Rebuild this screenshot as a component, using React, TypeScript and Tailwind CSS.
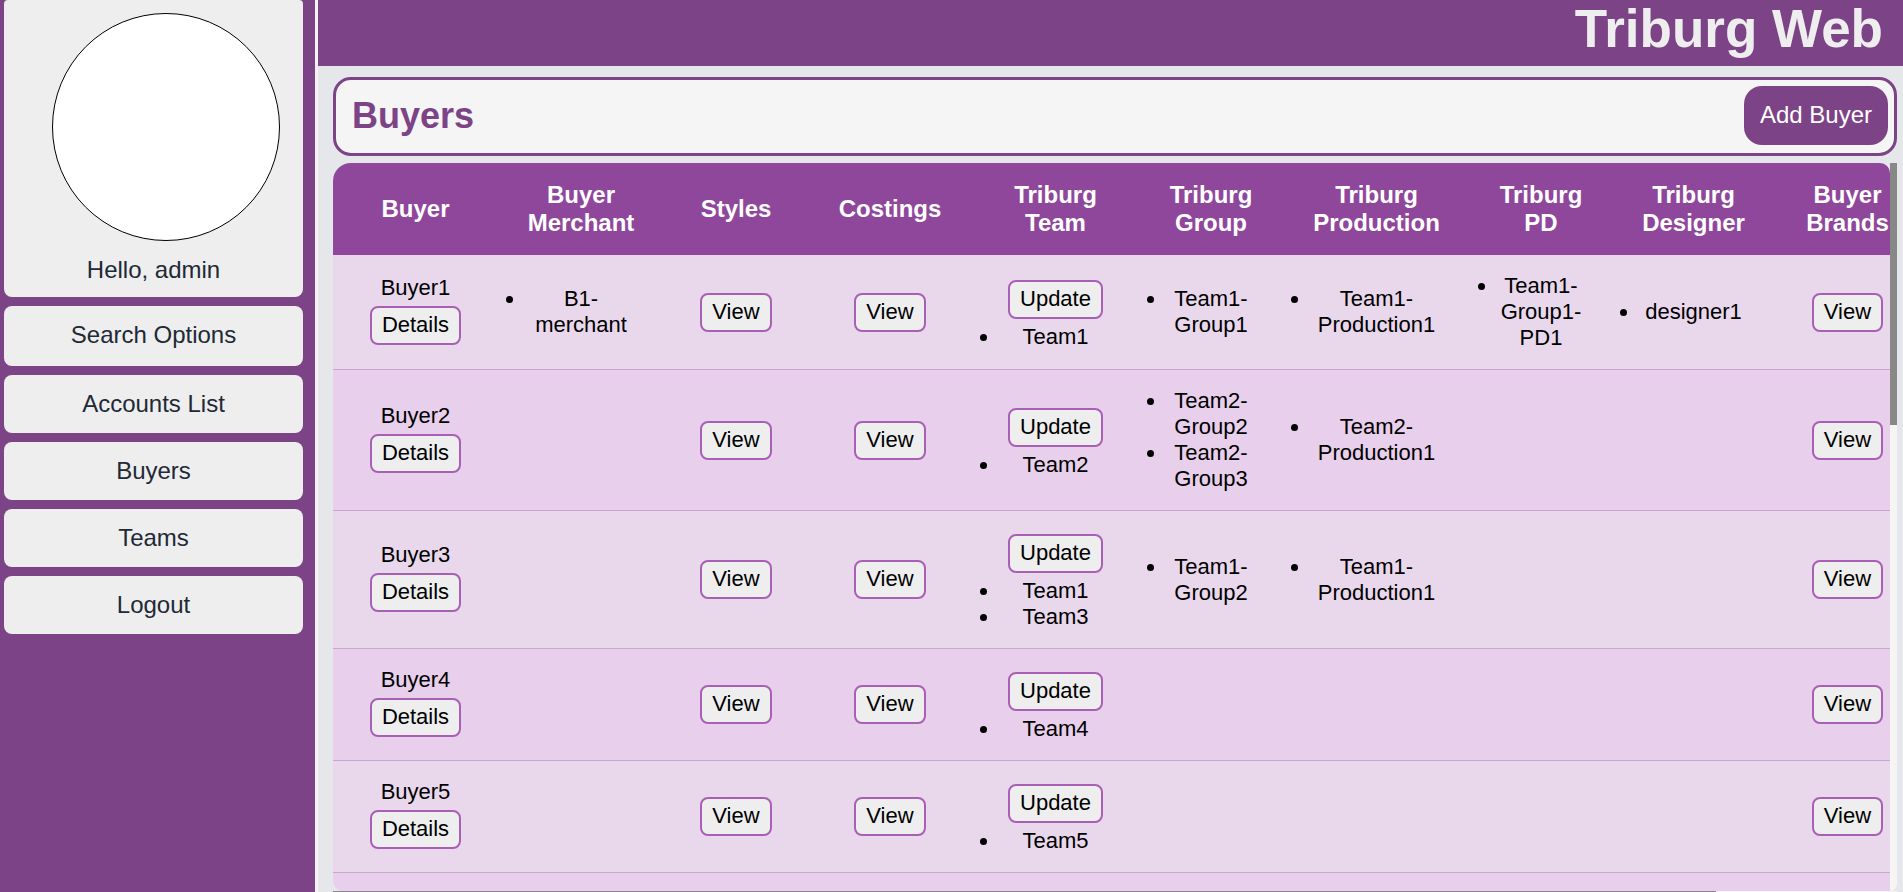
type Buyer = {
  name: string;
  merchants: string[];
  teams: string[];
  groups: string[];
  productions: string[];
  pds: string[];
  designers: string[];
};

const buyers: Buyer[] = [
  {
    name: "Buyer1",
    merchants: ["B1-merchant"],
    teams: ["Team1"],
    groups: ["Team1-Group1"],
    productions: ["Team1-Production1"],
    pds: ["Team1-Group1-PD1"],
    designers: ["designer1"],
  },
  {
    name: "Buyer2",
    merchants: [],
    teams: ["Team2"],
    groups: ["Team2-Group2", "Team2-Group3"],
    productions: ["Team2-Production1"],
    pds: [],
    designers: [],
  },
  {
    name: "Buyer3",
    merchants: [],
    teams: ["Team1", "Team3"],
    groups: ["Team1-Group2"],
    productions: ["Team1-Production1"],
    pds: [],
    designers: [],
  },
  { name: "Buyer4", merchants: [], teams: ["Team4"], groups: [], productions: [], pds: [], designers: [] },
  { name: "Buyer5", merchants: [], teams: ["Team5"], groups: [], productions: [], pds: [], designers: [] },
];

const columns = [
  { title: "Buyer", width: "w-[165px]" },
  { title: "Buyer Merchant", width: "w-[166px]" },
  { title: "Styles", width: "w-[144px]" },
  { title: "Costings", width: "w-[164px]" },
  { title: "Triburg Team", width: "w-[167px]" },
  { title: "Triburg Group", width: "w-[144px]" },
  { title: "Triburg Production", width: "w-[187px]" },
  { title: "Triburg PD", width: "w-[142px]" },
  { title: "Triburg Designer", width: "w-[163px]" },
  { title: "Buyer Brands", width: "w-[145px]" },
];

const links = ["Accounts List", "Buyers", "Teams", "Logout"];

function CellButton({ label }: { label: string }) {
  return (
    <button
      type="button"
      className="mx-auto my-[5px] block rounded-lg border-2 border-[#a95fb6] bg-[#eeeeee] px-[10px] pt-1 pb-[5px] leading-[26px]"
    >
      {label}
    </button>
  );
}

function Items({ items }: { items: string[] }) {
  if (items.length === 0) return null;
  return (
    <ul className="list-outside list-disc">
      {items.map((item) => (
        <li key={item}>{item}</li>
      ))}
    </ul>
  );
}

function ListCell({ items }: { items: string[] }) {
  return (
    <td className="border-b border-[#c9a6d1] px-7 py-[18px]">
      <Items items={items} />
    </td>
  );
}

function ButtonCell({ label }: { label: string }) {
  return (
    <td className="border-b border-[#c9a6d1] py-[18px]">
      <CellButton label={label} />
    </td>
  );
}

function BuyersTable() {
  return (
    <table className="w-[1587px] table-fixed border-separate border-spacing-0 text-center text-[22px] leading-[26px] text-black">
      <colgroup>
        {columns.map((c) => (
          <col key={c.title} className={c.width} />
        ))}
      </colgroup>
      <thead className="bg-[#8f479c] text-white">
        <tr>
          {columns.map((c) => (
            <th key={c.title} scope="col" className="px-6 py-[18px] text-2xl leading-[28px] font-bold">
              {c.title}
            </th>
          ))}
        </tr>
      </thead>
      <tbody>
        {buyers.map((b) => (
          <tr key={b.name} className="odd:bg-[#e9d8ec] even:bg-[#e8cfeb]">
            <td className="border-b border-[#c9a6d1] py-[18px]">
              {b.name}
              <CellButton label="Details" />
            </td>
            <ListCell items={b.merchants} />
            <ButtonCell label="View" />
            <ButtonCell label="View" />
            <td className="border-b border-[#c9a6d1] px-7 py-[18px]">
              <CellButton label="Update" />
              <Items items={b.teams} />
            </td>
            <ListCell items={b.groups} />
            <ListCell items={b.productions} />
            <ListCell items={b.pds} />
            <ListCell items={b.designers} />
            <ButtonCell label="View" />
          </tr>
        ))}
        <tr className="bg-[#e8cfeb]">
          <td colSpan={10} className="h-28" />
        </tr>
      </tbody>
    </table>
  );
}

export default function App() {
  return (
    <div className="flex h-screen overflow-hidden bg-[#e5e7eb] font-['Liberation_Sans',Arial,sans-serif]">
      <aside className="w-[318px] shrink-0 border-r-[3px] border-[#f5f5f5] bg-[#7d4387] pr-3 pl-1 text-2xl leading-[28px] text-[#212936]">
        <div className="rounded-t-[4px] rounded-b-lg bg-[#eeeeee] pt-[13px] pb-[13px] text-center">
          <div className="ml-12 size-[228px] rounded-full border border-black bg-white" />
          <p className="mt-[15px]">Hello, admin</p>
        </div>
        <nav className="mt-[9px] flex flex-col gap-[9px] text-center">
          <button type="button" className="rounded-lg bg-[#eeeeee] pt-[15px] pb-[17px]">
            Search Options
          </button>
          {links.map((l) => (
            <a key={l} href="#" className="rounded-lg bg-[#eeeeee] py-[15px]">
              {l}
            </a>
          ))}
        </nav>
      </aside>

      <div className="flex min-w-0 flex-1 flex-col">
        <header className="h-[66px] shrink-0 bg-[#7d4387] pr-5 text-right">
          <h1 className="text-[53px] leading-[58px] font-bold text-[#eeeeee]">Triburg Web</h1>
        </header>

        <main className="flex min-h-0 flex-1 flex-col pt-[11px] pr-[6px] pl-[15px]">
          <div className="flex shrink-0 items-center justify-between rounded-[18px] border-3 border-[#7d4387] bg-[#f5f5f5] pt-[6px] pr-[6px] pb-2 pl-4">
            <h2 className="text-4xl leading-[42px] font-bold text-[#7d4387]">Buyers</h2>
            <button
              type="button"
              className="rounded-[18px] bg-[#7d4387] px-4 pt-[15px] pb-4 text-2xl leading-[28px] text-white"
            >
              Add Buyer
            </button>
          </div>

          <div className="mt-[7px] -mb-[6px] flex min-h-0 flex-1 flex-col">
            <div className="flex min-h-0 flex-1">
              <div className="min-w-0 flex-1 overflow-auto rounded-tl-[18px] rounded-tr-[10px] rounded-bl-[10px] [scrollbar-width:none]">
                <BuyersTable />
              </div>
              <div className="w-[7px] shrink-0 rounded-br-[10px] bg-[#f5f5f5]">
                <div className="h-[36%] bg-[#888888]" />
              </div>
            </div>
            <div className="h-[7px] shrink-0 bg-[#f5f5f5]">
              <div className="h-full w-[1383px] max-w-full bg-[#888888]" />
            </div>
          </div>
        </main>
      </div>
    </div>
  );
}
